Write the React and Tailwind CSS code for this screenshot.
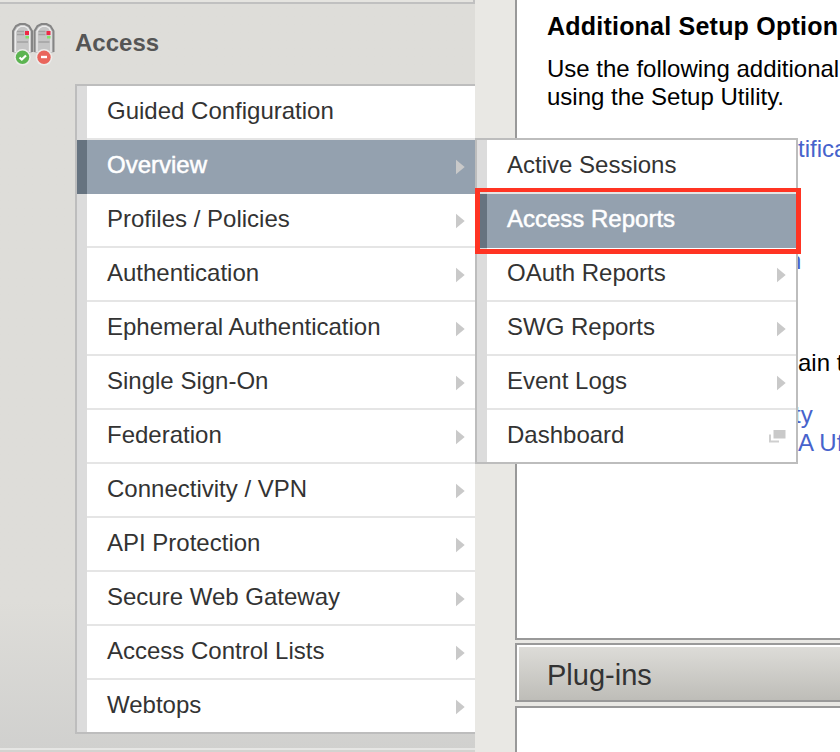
const accessItems = [
  { label: 'Guided Configuration' },
  { label: 'Overview', arrow: true, active: true },
  { label: 'Profiles / Policies', arrow: true },
  { label: 'Authentication', arrow: true },
  { label: 'Ephemeral Authentication', arrow: true },
  { label: 'Single Sign-On', arrow: true },
  { label: 'Federation', arrow: true },
  { label: 'Connectivity / VPN', arrow: true },
  { label: 'API Protection', arrow: true },
  { label: 'Secure Web Gateway', arrow: true },
  { label: 'Access Control Lists', arrow: true },
  { label: 'Webtops', arrow: true },
];

const overviewItems = [
  { label: 'Active Sessions' },
  { label: 'Access Reports', active: true },
  { label: 'OAuth Reports', arrow: true },
  { label: 'SWG Reports', arrow: true },
  { label: 'Event Logs', arrow: true },
  { label: 'Dashboard', popup: true },
];

function Arrow() {
  return (
    <svg width="9" height="16" viewBox="0 0 9 16" className="mt-px shrink-0">
      <path d="M0 .8 8.7 8 0 15.2Z" fill="#c9c9c9" />
    </svg>
  );
}

function PopupIcon() {
  return (
    <svg width="17" height="13" viewBox="0 0 17 13" className="shrink-0">
      <path d="M4.5 0h12v8.5h-12Z" fill="#c9c9c9" />
      <path d="M1 4.5V11.5H10" fill="none" stroke="#cfcfcf" strokeWidth="2" />
    </svg>
  );
}

function MenuRow({ item }) {
  return (
    <li
      className={`group flex h-[54px] border-b-2 last:h-[52px] last:border-b-0 ${
        item.active ? 'border-[#94a1af] bg-[#94a1af]' : 'border-[#e5e5e5] bg-white'
      }`}
    >
      <span
        className={`-mb-0.5 w-2.5 shrink-0 group-last:mb-0 ${item.active ? 'bg-[#667380]' : 'bg-[#dcdcdc]'}`}
      />
      <span className="flex min-w-0 flex-1 items-center justify-between pl-5">
        <span
          className={`pb-0.5 text-2xl leading-none whitespace-nowrap ${
            item.active ? 'text-white [-webkit-text-stroke:0.5px_white]' : 'text-[#333]'
          }`}
        >
          {item.label}
        </span>
        {item.arrow && <Arrow />}
        {item.popup && <PopupIcon />}
      </span>
    </li>
  );
}

function Server({ x }) {
  return (
    <g transform={`translate(${x} 0)`}>
      <path d="M1 31V9L4 4 8 2h5l4 2 3 5v22Z" fill="#c4c4c4" />
      <path d="M1 30V9L4 4 8 2h5l4 2 3 5v21" fill="none" stroke="#858585" strokeWidth="2" />
      <path d="M3.5 30V9.5L6 6l3-1.7h3.5L15.5 6l2 3.5V30" fill="#c5c5c5" stroke="#ededed" strokeWidth="1.3" />
      <path d="M5 9.5h7M5 12.5h7M5 20h11" stroke="#a3a3a3" strokeWidth="1.4" />
      <rect x="13" y="9" width="4" height="4" fill="#ed2945" />
      <rect x="13.5" y="14" width="3.5" height="2.5" fill="#82e36b" />
    </g>
  );
}

function AccessIcon() {
  return (
    <svg width="46" height="44" viewBox="0 0 46 44" className="shrink-0">
      <Server x={1} />
      <Server x={22.5} />
      <circle cx="11.5" cy="35.3" r="8.3" fill="#ececea" />
      <circle cx="11.5" cy="35.3" r="6.7" fill="#5cb451" />
      <path d="m8.5 35.5 2.3 2 4.2-4" fill="none" stroke="#fff" strokeWidth="2.2" />
      <circle cx="33" cy="35.3" r="8.3" fill="#ececea" />
      <circle cx="33" cy="35.3" r="6.7" fill="#e9655c" />
      <path d="M30 35h6" stroke="#fff" strokeWidth="2.4" />
    </svg>
  );
}

function Sidebar() {
  return (
    <nav className="flex w-[475px] shrink-0 flex-col bg-[#deddd9] bg-linear-to-b from-[#deddd9] from-80% to-[#d0d0ce]">
      <div className="h-1 shrink-0 border-r-2 border-b-2 border-[#c0c0c0] bg-[#e5e4e0]" />
      <header className="flex h-20 shrink-0 items-start pt-[18px] pl-[11px]">
        <AccessIcon />
        <h2 className="ml-[18px] pt-[9px] text-2xl leading-none font-bold text-[#555]">Access</h2>
      </header>
      <ul className="ml-[75px] border-y-2 border-l-2 border-[#bdbdbd] [&>li]:pr-2.5">
        {accessItems.map((item) => (
          <MenuRow key={item.label} item={item} />
        ))}
      </ul>
      <div className="mt-auto h-1 border-t-2 border-[#e6e6e4] bg-[#d3d3d0]" />
    </nav>
  );
}

function SetupPanel() {
  return (
    <section className="h-[640px] w-[360px] shrink-0 border-b-2 border-l-2 border-[#999] bg-white pt-3 pl-[30px] text-2xl leading-7 whitespace-nowrap text-black">
      <h3 className="h-[43px] text-[25px] leading-7 font-bold tracking-[0.22px]">Additional Setup Option</h3>
      <p className="leading-7">Use the following additional</p>
      <p className="leading-7">using the Setup Utility.</p>
      <div className="pl-[251px] leading-7 text-[#4763cc]">
        <p className="mt-6">tifica</p>
        <p className="mt-[84px] -ml-2.5">n</p>
        <p className="mt-[74px] text-black">ain t</p>
        <p className="mt-6 -ml-1">ty</p>
        <p>A Uf</p>
      </div>
    </section>
  );
}

export default function App() {
  return (
    <div className="relative flex h-[752px] w-[840px] overflow-hidden bg-[#e9e8e4] font-['Liberation_Sans',Arial,sans-serif]">
      <Sidebar />
      <main className="ml-10 flex min-w-0 flex-1 flex-col">
        <SetupPanel />
        <header className="mt-[3px] h-[59px] w-[360px] shrink-0 border-2 border-[#999] bg-white pt-0.5 pl-0.5">
          <h3 className="h-full bg-linear-to-b from-[#dddcd8] to-[#bebdb8] pt-2.5 pl-7 text-[29px] leading-9 text-[#333]">
            Plug-ins
          </h3>
        </header>
        <section className="mt-1 w-[360px] flex-1 border-t-2 border-l-2 border-[#999] bg-white" />
      </main>
      <ul className="absolute top-[138px] left-[475px] w-[323px] border-2 border-[#bdbdbd] [&>li]:pr-2.5">
        {overviewItems.map((item) => (
          <MenuRow key={item.label} item={item} />
        ))}
      </ul>
      <div className="absolute top-[188px] left-[475px] h-[66px] w-[326px] border-[5px] border-t-4 border-[#ff3423]" />
    </div>
  );
}
